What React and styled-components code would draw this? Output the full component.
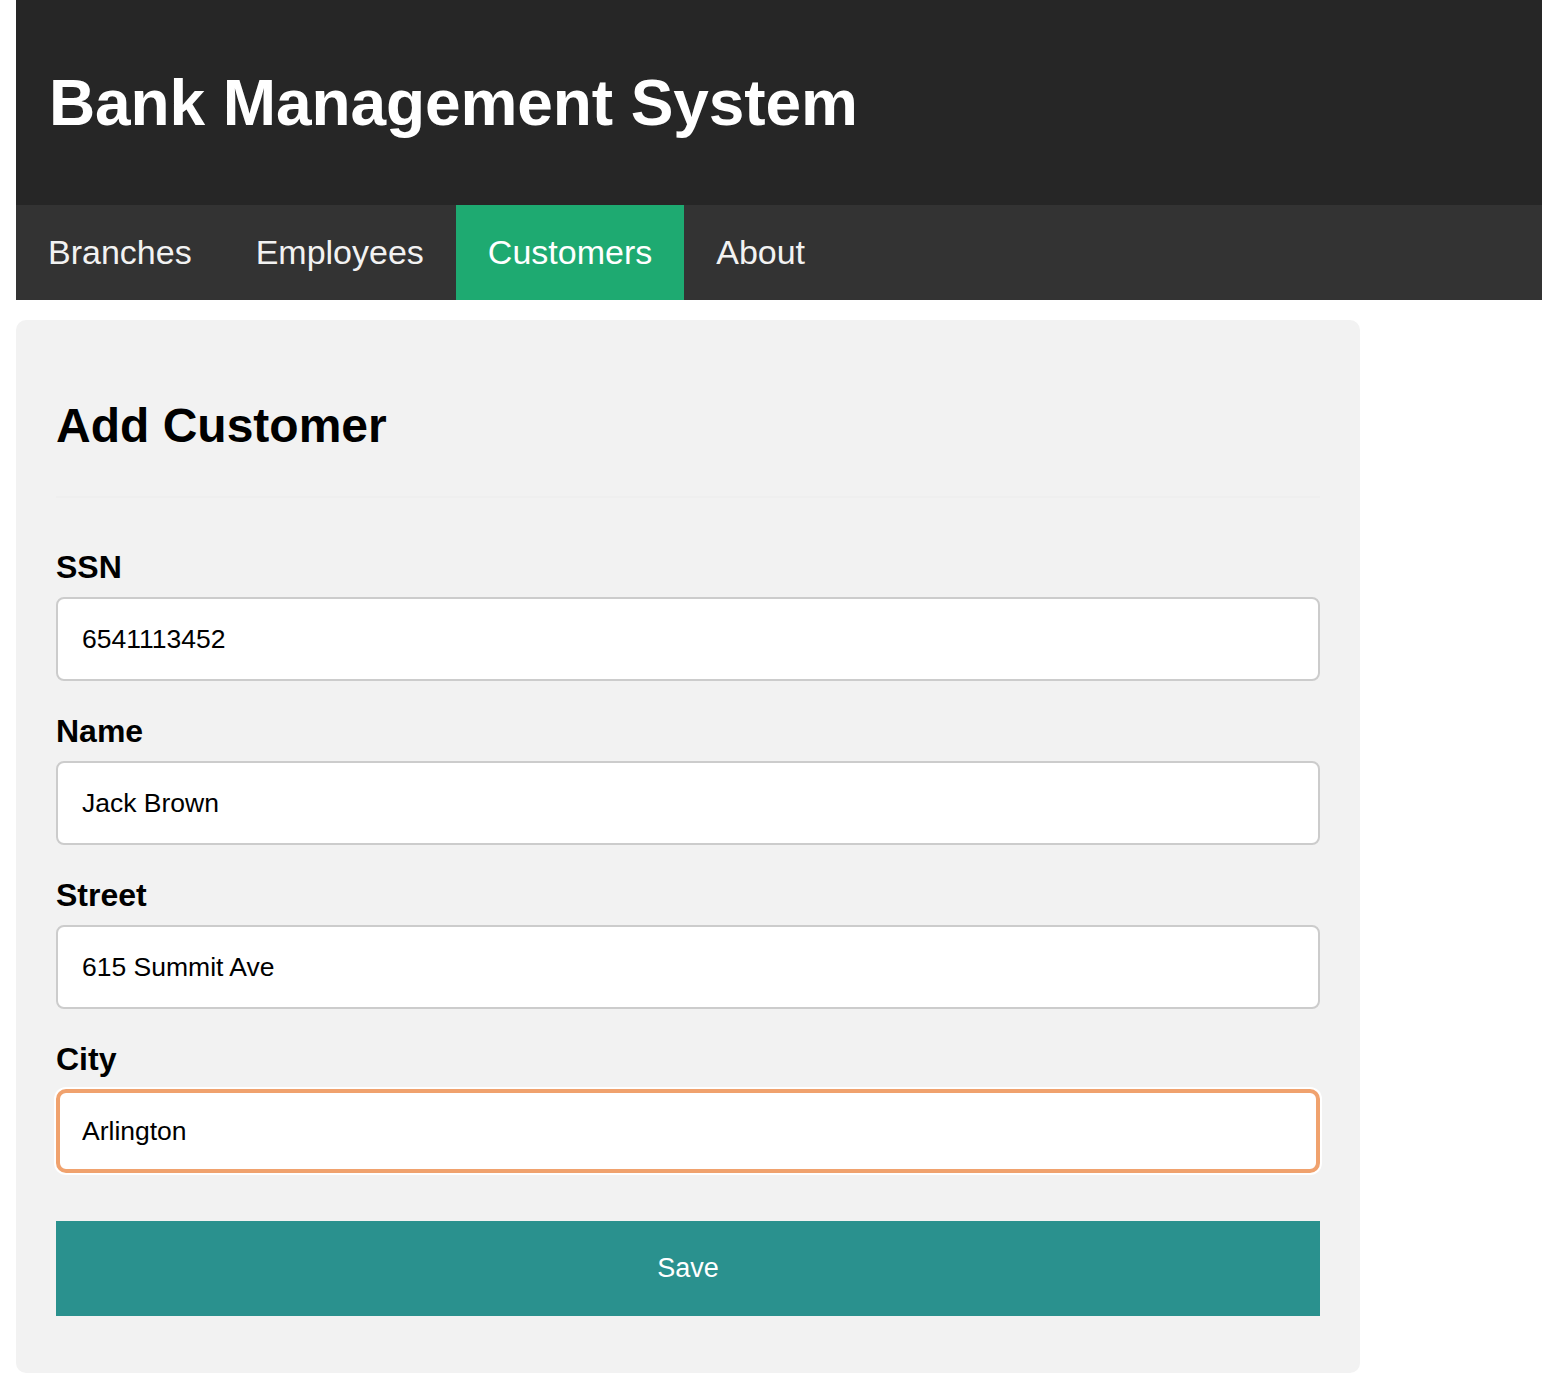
import React, { useEffect, useRef } from 'react'
import styled, { createGlobalStyle, css } from 'styled-components'

const GlobalStyle = createGlobalStyle`
  html, body {
    margin: 0;
    background: #ffffff;
  }

  body {
    padding-left: 16px;
    font-family: "Liberation Sans", Arial, Helvetica, sans-serif;
  }

  * {
    box-sizing: border-box;
  }
`

const Header = styled.header`
  background: #262626;
  height: 205px;
  display: flex;
  align-items: center;
  padding: 0 32px 0 33px;

  h1 {
    margin: 0;
    color: #ffffff;
    font-size: 64px;
    font-weight: 700;
    letter-spacing: -0.1px;
  }
`

const Nav = styled.nav`
  background: #333333;
  height: 95px;
  display: flex;
`

const NavLink = styled.a`
  display: flex;
  align-items: center;
  padding: 0 32px;
  font-size: 34px;
  color: #f2f2f2;
  text-decoration: none;
  cursor: pointer;

  ${({ $active }) => $active && css`
    background: #1eaa71;
    color: #ffffff;
  `}
`

const Card = styled.section`
  width: 1344px;
  margin-top: 20px;
  background: #f2f2f2;
  border-radius: 10px;
  padding: 40px 40px 57px;

  h2 {
    margin: 0;
    padding-top: 38px;
    font-size: 48px;
    line-height: 55px;
    font-weight: 700;
    color: #000;
  }

  hr {
    margin: 43px 0 0;
    border: none;
    height: 2px;
    background: #efefef;
  }
`

const Form = styled.form`
  display: flex;
  flex-direction: column;
  padding-top: 51px;
`

const Field = styled.div`
  display: flex;
  flex-direction: column;
  margin-bottom: 32px;

  label {
    font-size: 32px;
    line-height: 36px;
    font-weight: 700;
    color: #000;
    margin-bottom: 12px;
  }
`

const Input = styled.input`
  height: 84px;
  width: 100%;
  padding: 0 24px;
  font-family: inherit;
  font-size: 26.5px;
  color: #000;
  background: #ffffff;
  border: 2px solid #cccccc;
  border-radius: 8px;
  outline: none;
  caret-color: #000;

  ${({ $focused }) => $focused && css`
    border: 4px solid #f0a26e;
    border-radius: 10px;
    padding: 0 22px;
    box-shadow: 0 0 0 2px #ffffff;
  `}
`

const SaveButton = styled.button`
  margin-top: 16px;
  height: 95px;
  width: 100%;
  border: none;
  background: #2a918e;
  color: #ffffff;
  font-family: inherit;
  font-size: 27px;
  cursor: pointer;
`

const fields = [
  { label: 'SSN', value: '6541113452' },
  { label: 'Name', value: 'Jack Brown' },
  { label: 'Street', value: '615 Summit Ave' },
  { label: 'City', value: 'Arlington', focused: true },
]

const App = () => {
  const cityRef = useRef(null)

  useEffect(() => {
    const el = cityRef.current
    if (el) {
      el.focus()
      el.setSelectionRange(el.value.length, el.value.length)
    }
  }, [])

  return (
    <>
      <GlobalStyle />
      <Header>
        <h1>Bank Management System</h1>
      </Header>
      <Nav>
        <NavLink>Branches</NavLink>
        <NavLink>Employees</NavLink>
        <NavLink $active>Customers</NavLink>
        <NavLink>About</NavLink>
      </Nav>
      <Card>
        <h2>Add Customer</h2>
        <hr />
        <Form onSubmit={(e) => e.preventDefault()}>
          {fields.map((f) => (
            <Field key={f.label}>
              <label>{f.label}</label>
              <Input
                ref={f.focused ? cityRef : undefined}
                defaultValue={f.value}
                $focused={f.focused}
              />
            </Field>
          ))}
          <SaveButton type="submit">Save</SaveButton>
        </Form>
      </Card>
    </>
  )
}

export default App
